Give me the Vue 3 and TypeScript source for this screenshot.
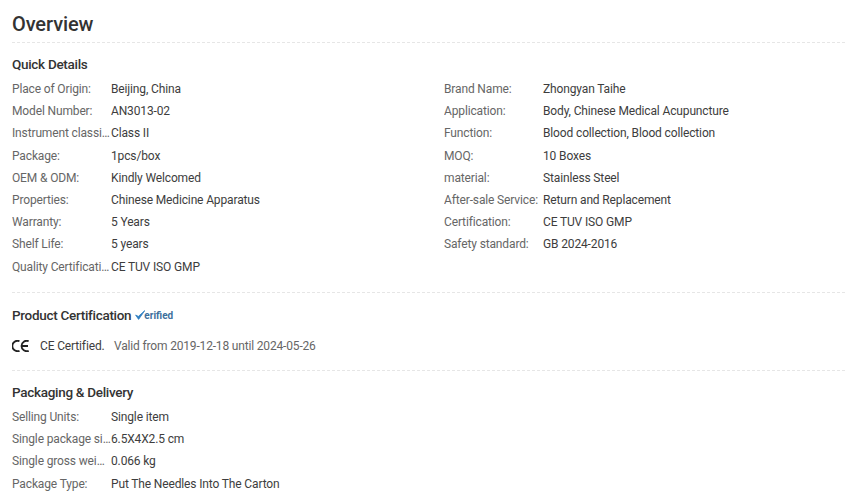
<script setup lang="ts">
type Row = [string, string]
const left: Row[] = [
  ['Place of Origin:', 'Beijing, China'],
  ['Model Number:', 'AN3013-02'],
  ['Instrument classification:', 'Class II'],
  ['Package:', '1pcs/box'],
  ['OEM & ODM:', 'Kindly Welcomed'],
  ['Properties:', 'Chinese Medicine Apparatus'],
  ['Warranty:', '5 Years'],
  ['Shelf Life:', '5 years'],
  ['Quality Certification:', 'CE TUV ISO GMP'],
]
const right: Row[] = [
  ['Brand Name:', 'Zhongyan Taihe'],
  ['Application:', 'Body, Chinese Medical Acupuncture'],
  ['Function:', 'Blood collection, Blood collection'],
  ['MOQ:', '10 Boxes'],
  ['material:', 'Stainless Steel'],
  ['After-sale Service:', 'Return and Replacement'],
  ['Certification:', 'CE TUV ISO GMP'],
  ['Safety standard:', 'GB 2024-2016'],
]
const packaging: Row[] = [
  ['Selling Units:', 'Single item'],
  ['Single package size:', '6.5X4X2.5 cm'],
  ['Single gross weight:', '0.066 kg'],
  ['Package Type:', 'Put The Needles Into The Carton'],
]
</script>

<template>
  <main class="page">
    <h1 class="title">Overview</h1>
    <section class="section quick">
      <h2 class="heading">Quick Details</h2>
      <div class="columns">
        <div class="col">
          <div v-for="r in left" :key="r[0]" class="row">
            <span class="label">{{ r[0] }}</span><span class="value">{{ r[1] }}</span>
          </div>
        </div>
        <div class="col">
          <div v-for="r in right" :key="r[0]" class="row">
            <span class="label">{{ r[0] }}</span><span class="value">{{ r[1] }}</span>
          </div>
        </div>
      </div>
    </section>
    <section class="section cert">
      <div class="cert-head">
        <h2 class="heading">Product Certification</h2>
        <span class="verified"><svg class="tick" viewBox="0 0 10 10" width="10" height="10"><path d="M0.6 5 L3.6 9.4 L9.8 0.6 L3.4 6.4 Z" fill="#2f7fc1" stroke="#2f7fc1" stroke-width="0.8"/></svg>erified</span>
      </div>
      <div class="cert-line">
        <svg class="ce" viewBox="0 0 18 12" width="18" height="12">
          <path d="M7.5 1.2 A5.2 5.2 0 1 0 7.5 10.8" fill="none" stroke="#222" stroke-width="1.8"/>
          <path d="M16.7 1.2 A5.2 5.2 0 1 0 16.7 10.8 M10 6 H16" fill="none" stroke="#222" stroke-width="1.8"/>
        </svg>
        <span class="cert-name">CE Certified.</span>
        <span class="cert-valid">Valid from 2019-12-18 until 2024-05-26</span>
      </div>
    </section>
    <section class="section packaging">
      <h2 class="heading">Packaging &amp; Delivery</h2>
      <div class="col">
        <div v-for="r in packaging" :key="r[0]" class="row">
          <span class="label">{{ r[0] }}</span><span class="value">{{ r[1] }}</span>
        </div>
      </div>
    </section>
  </main>
</template>

<style>
html, body { margin: 0; background: #fff; overflow: hidden; }
</style>

<style scoped>
.page {
  width: 833px;
  height: 494px;
  padding: 0 6px 0 12px;
  font-family: Roboto, "Liberation Sans", sans-serif;
  overflow: hidden;
}
.title {
  margin: 0;
  height: 42px;
  box-sizing: border-box;
  padding-top: 12px;
  font-size: 20px;
  line-height: 24px;
  font-weight: 500;
  letter-spacing: -0.1px;
  color: #333;
}
.section { border-top: 1px dashed #e6e6e6; }
.quick { padding-top: 13px; height: 250px; box-sizing: border-box; }
.cert { height: 78px; box-sizing: border-box; padding-top: 14px; }
.packaging { padding-top: 13px; }
.heading {
  margin: 0;
  font-size: 13.5px;
  line-height: 16px;
  font-weight: 500;
  letter-spacing: -0.3px;
  color: #333;
}
.quick .heading, .packaging .heading { margin-bottom: 6px; }
.columns { display: grid; grid-template-columns: 432px 1fr; }
.row { display: flex; height: 22.2px; align-items: center; font-size: 12px; letter-spacing: -0.14px; }
.label {
  width: 99px;
  flex: none;
  color: #666;
  white-space: nowrap;
  overflow: hidden;
  text-overflow: ellipsis;
}
.value { color: #3d3d3d; white-space: nowrap; }
.cert-head { display: flex; align-items: center; gap: 4px; }
.verified { font-size: 10px; font-weight: 700; color: #3d6f9c; display: inline-flex; align-items: center; }
.tick { margin-right: -1px; }
.cert-line { display: flex; align-items: center; margin-top: 16px; font-size: 12px; letter-spacing: -0.14px; }
.ce { margin-right: 10px; }
.cert-name { color: #3d3d3d; margin-right: 9.5px; }
.cert-valid { color: #666; letter-spacing: -0.17px; }
</style>
